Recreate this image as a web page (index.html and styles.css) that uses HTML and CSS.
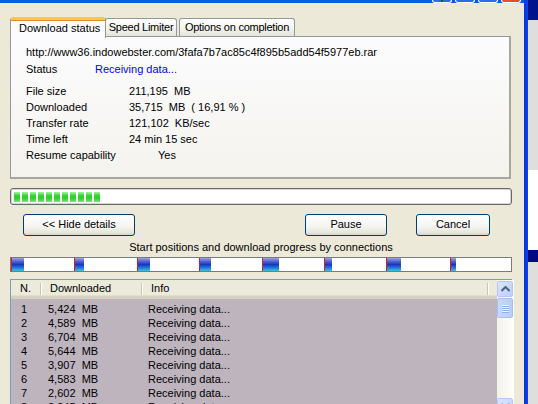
FILE: index.html
```html
<!DOCTYPE html>
<html>
<head>
<meta charset="utf-8">
<link rel="stylesheet" href="styles.css">
</head>
<body>
<div class="screen">
  <div class="win">
    <div class="titlebar">
      <div class="tbtn"><span class="help-dot"></span></div>
      <div class="tbtn"></div>
      <div class="tbtn"></div>
      <div class="tbtn close"></div>
    </div>
    <div class="client">
      <div class="tabs">
        <div class="tab active">Download status</div>
        <div class="tab">Speed Limiter</div>
        <div class="tab">Options on completion</div>
      </div>
      <div class="panel">
        <div class="url">http://www36.indowebster.com/3fafa7b7ac85c4f895b5add54f5977eb.rar</div>
        <div class="row status"><span class="lbl">Status</span><span class="blue">Receiving data...</span></div>
        <div class="info">
          <div class="row"><span class="lbl2">File size</span><span class="val">211,195  MB</span></div>
          <div class="row"><span class="lbl2">Downloaded</span><span class="val">35,715  MB  ( 16,91 % )</span></div>
          <div class="row"><span class="lbl2">Transfer rate</span><span class="val">121,102  KB/sec</span></div>
          <div class="row"><span class="lbl2">Time left</span><span class="val">24 min 15 sec</span></div>
          <div class="row"><span class="lbl2">Resume capability</span><span class="val yes">Yes</span></div>
        </div>
      </div>
      <div class="progress">
        <span class="blk"></span><span class="blk"></span><span class="blk"></span><span class="blk"></span><span class="blk"></span><span class="blk"></span><span class="blk"></span><span class="blk"></span><span class="blk"></span><span class="blk"></span><span class="blk"></span>
      </div>
      <div class="buttons">
        <div class="btn hide">&lt;&lt; Hide details</div>
        <div class="btn pause">Pause</div>
        <div class="btn cancel">Cancel</div>
      </div>
      <div class="caption">Start positions and download progress by connections</div>
      <div class="conns">
        <div class="seg" style="width:63px"><span class="fill" style="width:12px"></span></div>
        <div class="seg" style="width:63px"><span class="fill" style="width:9px"></span></div>
        <div class="seg" style="width:62px"><span class="fill" style="width:12px"></span></div>
        <div class="seg" style="width:63px"><span class="fill" style="width:11px"></span></div>
        <div class="seg" style="width:62px"><span class="fill" style="width:16px"></span></div>
        <div class="seg" style="width:62px"><span class="fill" style="width:7px"></span></div>
        <div class="seg" style="width:64px"><span class="fill" style="width:14px"></span></div>
        <div class="seg" style="width:60px"><span class="fill" style="width:5px"></span></div>
      </div>
      <div class="list">
        <div class="list-main">
          <div class="lhead">
            <div class="hc c1">N.</div>
            <div class="hc c2">Downloaded</div>
            <div class="hc c3">Info</div>
            <div class="hc c4"></div>
          </div>
          <div class="lrows">
            <div class="lr"><span class="c1">1</span><span class="c2">5,424  MB</span><span class="c3">Receiving data...</span></div>
            <div class="lr"><span class="c1">2</span><span class="c2">4,589  MB</span><span class="c3">Receiving data...</span></div>
            <div class="lr"><span class="c1">3</span><span class="c2">6,704  MB</span><span class="c3">Receiving data...</span></div>
            <div class="lr"><span class="c1">4</span><span class="c2">5,644  MB</span><span class="c3">Receiving data...</span></div>
            <div class="lr"><span class="c1">5</span><span class="c2">3,907  MB</span><span class="c3">Receiving data...</span></div>
            <div class="lr"><span class="c1">6</span><span class="c2">4,583  MB</span><span class="c3">Receiving data...</span></div>
            <div class="lr"><span class="c1">7</span><span class="c2">2,602  MB</span><span class="c3">Receiving data...</span></div>
            <div class="lr"><span class="c1">8</span><span class="c2">3,245  MB</span><span class="c3">Receiving data...</span></div>
          </div>
        </div>
        <div class="vscroll">
          <div class="sbtn up"><svg width="9" height="6" viewBox="0 0 9 6"><path d="M0.5 5 L4.5 1 L8.5 5" fill="none" stroke="#4d6185" stroke-width="2"/></svg></div>
          <div class="thumb"><span></span><span></span><span></span><span></span></div>
          <div class="track"></div>
          <div class="sbtn down"><svg width="9" height="6" viewBox="0 0 9 6"><path d="M0.5 1 L4.5 5 L8.5 1" fill="none" stroke="#4d6185" stroke-width="2"/></svg></div>
        </div>
      </div>
    </div>
  </div>
  <div class="frame"></div>
  <div class="outside">
    <div class="o-navy"></div>
    <div class="o-grey"></div>
    <div class="o-white"></div>
    <div class="o-navy2"></div>
    <div class="o-grey2"></div>
  </div>
</div>
</body>
</html>
```

FILE: styles.css
```css
* { box-sizing: border-box; }
html, body { margin: 0; padding: 0; }
body {
  width: 538px;
  height: 404px;
  overflow: hidden;
  font-family: "Liberation Sans", Arial, sans-serif;
  font-size: 11px;
  color: #000;
  background: #ECE9D8;
}
.screen {
  display: flex;
  width: 538px;
  height: 404px;
  overflow: hidden;
}
.win {
  width: 524px;
  flex: none;
  display: flex;
  flex-direction: column;
  background: #ECE9D8;
}
.titlebar {
  height: 3px;
  flex: none;
  background: #0a5ae6;
  display: flex;
  justify-content: flex-end;
  gap: 3px;
  padding-right: 3px;
  overflow: hidden;
}
.tbtn {
  width: 20px;
  height: 3px;
  background: #2a6cf0;
  border: 1px solid #fff;
  border-top: none;
  border-radius: 0 0 3px 3px;
  position: relative;
}
.tbtn.close { background: #d9532c; }
.help-dot {
  position: absolute;
  left: 8px;
  top: 0;
  width: 2px;
  height: 2px;
  background: #1b5e1b;
}
.client {
  flex: 1;
  display: flex;
  flex-direction: column;
  padding: 12px 0 0 10px;
  width: 514px;
}
.tabs {
  display: flex;
  align-items: flex-end;
  height: 23px;
  position: relative;
  z-index: 2;
  margin-bottom: -2px;
}
.tab {
  height: 18px;
  padding: 1px 2px 0;
  border: 1px solid #919B9C;
  border-bottom: none;
  border-radius: 3px 3px 0 0;
  background: linear-gradient(#ffffff, #f3f2ec 60%, #e4e2d8);
  margin-bottom: 2px;
  line-height: 14px;
  white-space: nowrap;
  text-align: center;
  letter-spacing: -0.25px;
  overflow: hidden;
}
.tab.active {
  width: 96px;
  height: 21px;
  padding: 1px 0 0 8px;
  text-align: left;
  letter-spacing: 0;
  background: #fcfcfe;
  border-top: 3px solid #ffc83c;
  margin-bottom: 0;
  box-shadow: inset 0 1px 0 #e68b2c;
}
.tab:nth-child(2) { width: 72px; margin-left: -1px; }
.tab:nth-child(3) { width: 116px; margin-left: 2px; }
.panel {
  width: 501px;
  height: 143px;
  border: 1px solid #919B9C;
  border-right-width: 2px;
  border-bottom-width: 2px;
  border-right-color: #a5a8a0;
  border-bottom-color: #a5a8a0;
  background: linear-gradient(#fcfcfe, #f4f3ee);
  padding: 8px 0 0 15px;
  position: relative;
  z-index: 1;
}
.url { height: 17px; line-height: 14px; }
.row { display: flex; height: 16px; line-height: 14px; }
.status { height: 22px; }
.lbl { width: 69px; }
.blue { color: #0000ff; }
.lbl2 { width: 103px; }
.val { white-space: pre; }
.val.yes { padding-left: 29px; }
.progress {
  margin-top: 9px;
  width: 502px;
  height: 17px;
  border: 1px solid #686868;
  border-radius: 3px;
  background: #fff;
  padding: 2px 3px;
  display: flex;
  gap: 2px;
  box-shadow: inset 0 0 0 1px #d6d6d6;
}
.blk {
  width: 6px;
  height: 10px;
  margin-top: 1px;
  background: linear-gradient(#aeeeae, #36d436 35%, #2fcf2f 65%, #7fe47f);
}
.buttons {
  display: flex;
  margin-top: 9px;
  height: 22px;
}
.btn {
  height: 22px;
  border: 1px solid #003C74;
  border-radius: 3px;
  background: linear-gradient(#ffffff, #f4f4f0 60%, #e6e3da 90%, #d6d0c5);
  text-align: center;
  line-height: 19px;
}
.btn.hide { width: 112px; margin-left: 13px; }
.btn.pause { width: 82px; margin-left: 170px; }
.btn.cancel { width: 74px; margin-left: 29px; }
.caption {
  margin-top: 4px;
  height: 17px;
  line-height: 14px;
  text-align: center;
  width: 502px;
}
.conns {
  width: 502px;
  height: 15px;
  border: 1px solid #7a7a84;
  background: #fff;
  display: flex;
}
.seg {
  height: 13px;
  border-left: 1px solid #e01818;
  flex: none;
  display: flex;
}
.fill {
  height: 13px;
  background: linear-gradient(#9aa5e8, #5766d0 25%, #1a36c0 50%, #1f7ad6 75%, #35c4e8);
}
.list {
  margin-top: 7px;
  width: 502px;
  flex: 1;
  border: 1px solid #7F9DB9;
  border-bottom: none;
  display: flex;
  background: #fff;
}
.list-main {
  flex: 1;
  display: flex;
  flex-direction: column;
  background: #BEB4BE;
}
.lhead {
  height: 19px;
  flex: none;
  background: #EBEADB;
  border-bottom: 3px solid #d6d2c2;
  box-shadow: inset 0 -1px 0 #e2decd;
  display: flex;
  line-height: 16px;
}
.hc {
  position: relative;
  padding-left: 9px;
}
.hc::after {
  content: "";
  position: absolute;
  right: 0;
  top: 3px;
  width: 1px;
  height: 12px;
  background: #c7c5b2;
  box-shadow: 1px 0 0 #fff;
}
.hc.c1 { width: 30px; }
.hc.c2 { width: 101px; }
.hc.c3 { width: 346px; }
.hc.c4 { flex: 1; }
.hc.c4::after { display: none; }
.lrows { padding-top: 3px; }
.lr {
  display: flex;
  height: 14px;
  line-height: 14px;
  white-space: pre;
}
.lr .c1 { width: 37px; padding-left: 10px; }
.lr .c2 { width: 100px; }
.lr .c3 { flex: 1; }
.vscroll {
  width: 17px;
  flex: none;
  display: flex;
  flex-direction: column;
  background: linear-gradient(to right, #f3f1ec, #fefefb);
  padding: 1px 1px 0 0;
}
.sbtn {
  width: 16px;
  height: 16px;
  border: 1px solid #b4c8f6;
  border-radius: 2px;
  background: linear-gradient(135deg, #dbe6fd, #bccffa);
  display: flex;
  align-items: center;
  justify-content: center;
  flex: none;
}
.thumb {
  margin-top: 1px;
  width: 16px;
  height: 20px;
  border: 1px solid #a9bff2;
  border-radius: 2px;
  background: linear-gradient(to right, #c9d8fc, #b8cdfa);
  display: flex;
  flex-direction: column;
  align-items: center;
  justify-content: center;
  gap: 1px;
}
.thumb span {
  width: 7px;
  height: 1px;
  background: #eef3fe;
  box-shadow: 0 1px 0 #8eaef0;
}
.track { flex: 1; }
.frame {
  width: 4px;
  flex: none;
  background: linear-gradient(to right, #0831d9, #0a45f0);
}
.outside {
  flex: 1;
  display: flex;
  flex-direction: column;
}
.o-navy { height: 20px; background: #00138c; }
.o-grey { height: 150px; background: #dedede; }
.o-white { height: 80px; background: #ffffff; }
.o-navy2 { height: 12px; background: #000a80; }
.o-grey2 { flex: 1; background: #dedede; }
```
